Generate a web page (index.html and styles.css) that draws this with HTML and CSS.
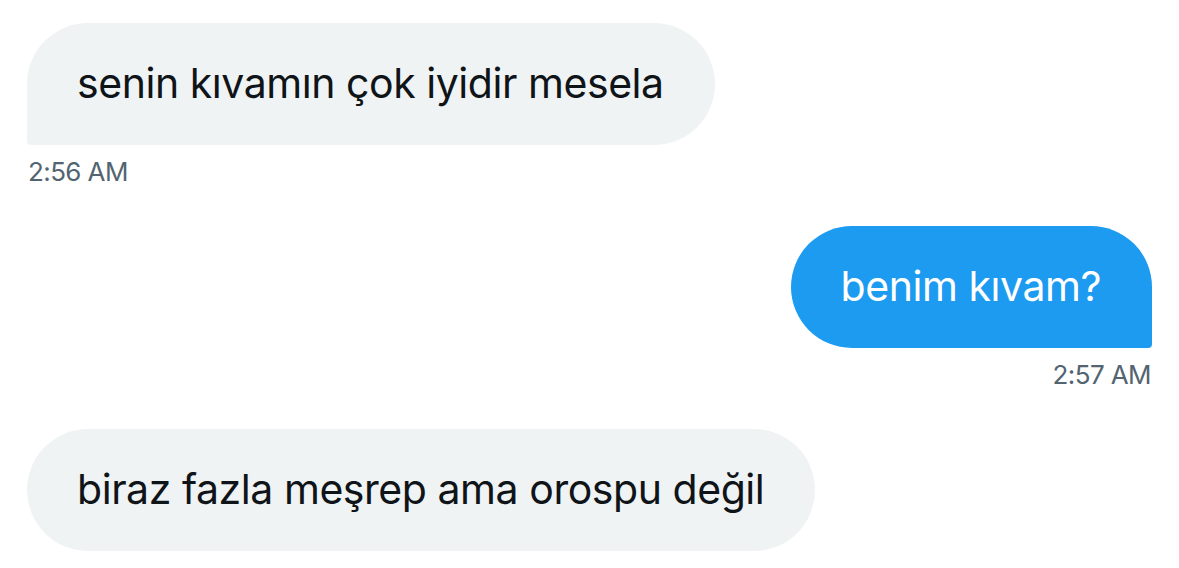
FILE: index.html
```html
<!DOCTYPE html>
<html lang="tr">
<head>
<meta charset="utf-8">
<link rel="stylesheet" href="styles.css">
</head>
<body>
<div class="chat">
  <div class="msg in">
    <div class="bubble first">senin kıvamın çok iyidir mesela</div>
    <div class="time">2:56 AM</div>
  </div>
  <div class="msg out">
    <div class="bubble">benim kıvam?</div>
    <div class="time">2:57 AM</div>
  </div>
  <div class="msg in">
    <div class="bubble last">biraz fazla meşrep ama orospu değil</div>
  </div>
</div>
</body>
</html>
```
FILE: styles.css
```css
html, body {
  margin: 0;
  padding: 0;
  background: #ffffff;
}
body {
  font-family: Inter, "Noto Sans", sans-serif;
}
.chat {
  display: flex;
  flex-direction: column;
  gap: 39px;
  padding: 23px 27px 0 27px;
}
.msg {
  display: flex;
  flex-direction: column;
}
.msg.in {
  align-items: flex-start;
}
.msg.out {
  align-items: flex-end;
}
.bubble {
  box-sizing: border-box;
  height: 122px;
  padding: 0 51px 2px 50px;
  display: flex;
  align-items: center;
  font-size: 41px;
  color: #0f1419;
  background: #eff3f4;
  border-radius: 61px 61px 61px 4px;
  letter-spacing: -0.45px;
}
.bubble.last {
  border-radius: 61px;
}
.out .bubble {
  background: #1d9bf0;
  color: #ffffff;
  border-radius: 61px 61px 4px 61px;
}
.time {
  margin-top: 12px;
  height: 30px;
  line-height: 30px;
  font-size: 26px;
  color: #536471;
  letter-spacing: -0.6px;
  padding: 0 1px;
}
```
